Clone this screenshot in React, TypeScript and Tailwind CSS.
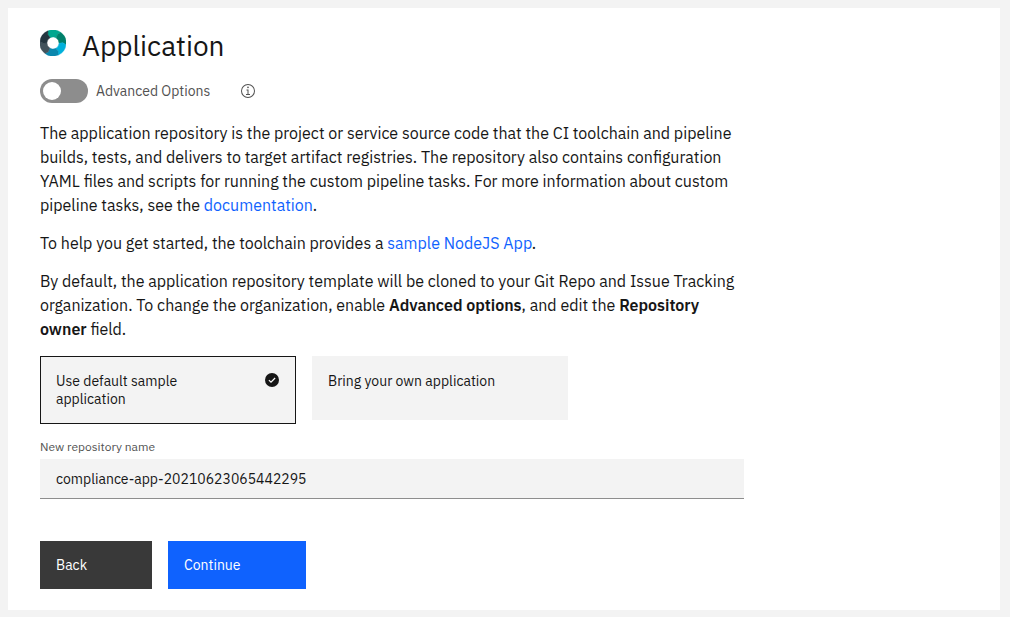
import { useState } from "react";

const linkClass = "text-[#0f62fe] hover:underline";

const choices = [
  { id: "sample", label: "Use default sample application" },
  { id: "own", label: "Bring your own application" },
];

const logoColors = ["#00a78f", "#00806a", "#00b0da", "#0a87ad", "#42535c", "#243640"];

function ToolchainLogo() {
  return (
    <svg className="mt-0.5 h-[26px] w-[26px] shrink-0" viewBox="0 0 26 26" aria-hidden="true">
      {logoColors.map((color, index) => (
        <path
          key={color}
          d="M8 .9A13 13 0 0 1 21 2.6L17.7 4.3 16.2 7.9A6 6 0 0 0 10.2 7.7L7.8 4.6Z"
          transform={`rotate(${index * 60} 13 13)`}
          fill={color}
          stroke={color}
          strokeWidth="0.4"
        />
      ))}
    </svg>
  );
}

export default function App() {
  const [choice, setChoice] = useState("sample");
  const [name, setName] = useState("compliance-app-20210623065442295");

  return (
    <main className="min-h-screen bg-[#f3f3f3] py-2 pl-2 pr-[10px] font-['IBM_Plex_Sans','Noto_Sans',sans-serif] text-[#161616]">
      <section className="bg-white px-8 pt-5 pb-[21px]">
        <header className="flex items-start gap-4">
          <ToolchainLogo />
          <h1 className="text-[28px] leading-9">Application</h1>
        </header>

        <div className="mt-[15px] flex h-6 items-center gap-[30px] text-sm">
          <label className="flex cursor-pointer items-center gap-2 text-[#525252]">
            <input type="checkbox" role="switch" className="peer sr-only" />
            <span className="flex h-6 w-12 items-center rounded-full bg-[#8d8d8d] px-[3px] peer-checked:justify-end peer-checked:bg-[#198038]">
              <span className="h-[18px] w-[18px] rounded-full bg-white" />
            </span>
            Advanced Options
          </label>
          <button type="button" aria-label="About advanced options" className="text-[#525252]">
            <svg className="h-4 w-4" viewBox="0 0 32 32" fill="currentColor" aria-hidden="true">
              <path d="M17 22v-9h-4v2h2v7h-3v2h8v-2zM16 7a1.7 1.7 0 1 0 1.7 1.7A1.7 1.7 0 0 0 16 7z" />
              <path d="M16 30a14 14 0 1 1 14-14 14 14 0 0 1-14 14zm0-26a12 12 0 1 0 12 12A12 12 0 0 0 16 4z" />
            </svg>
          </button>
        </div>

        <div className="mt-[18px] max-w-[704px] space-y-[14px] text-base leading-6">
          <p>
            The application repository is the project or service source code that the CI toolchain and pipeline
            builds, tests, and delivers to target artifact registries. The repository also contains configuration
            YAML files and scripts for running the custom pipeline tasks. For more information about custom
            pipeline tasks, see the <a href="#documentation" className={linkClass}>documentation</a>.
          </p>
          <p>
            To help you get started, the toolchain provides a{" "}
            <a href="#sample" className={linkClass}>sample NodeJS App</a>.
          </p>
          <p>
            By default, the application repository template will be cloned to your Git Repo and Issue Tracking
            organization. To change the organization, enable <strong className="font-semibold">Advanced options</strong>,
            and edit the <strong className="font-semibold">Repository owner</strong> field.
          </p>
        </div>

        <div role="radiogroup" aria-label="Application source" className="mt-[15px] flex flex-wrap items-start gap-4">
          {choices.map(({ id, label }) => (
            <label
              key={id}
              className="flex min-h-16 w-64 cursor-pointer items-start justify-between gap-6 border border-[#f3f3f3] bg-[#f3f3f3] p-[15px] text-sm leading-[18px] has-checked:border-[#161616]"
            >
              <input
                type="radio"
                name="source"
                value={id}
                checked={choice === id}
                onChange={() => setChoice(id)}
                className="sr-only"
              />
              <span className="max-w-44">{label}</span>
              {choice === id && (
                <svg className="h-4 w-4 shrink-0" viewBox="0 0 16 16" aria-hidden="true">
                  <circle cx="8" cy="8" r="7" fill="#161616" />
                  <path d="M4.9 8.1 7 10.2 11.1 6" fill="none" stroke="#fff" strokeWidth="1.2" />
                </svg>
              )}
            </label>
          ))}
        </div>

        <div className="mt-[15px] max-w-[704px]">
          <label htmlFor="repository-name" className="block text-xs leading-4 text-[#525252]">
            New repository name
          </label>
          <input
            id="repository-name"
            type="text"
            value={name}
            onChange={(event) => setName(event.target.value)}
            className="mt-1 block h-10 w-full rounded-none border-b border-[#8d8d8d] bg-[#f3f3f3] px-4 text-sm outline-none focus:border-[#0f62fe]"
          />
        </div>

        <div className="mt-[42px] flex gap-4 text-sm text-white">
          <button type="button" className="h-12 w-28 bg-[#393939] px-4 text-left hover:bg-[#4c4c4c]">Back</button>
          <button type="button" className="h-12 w-[138px] bg-[#0f62fe] px-4 text-left hover:bg-[#0353e9]">Continue</button>
        </div>
      </section>
    </main>
  );
}
